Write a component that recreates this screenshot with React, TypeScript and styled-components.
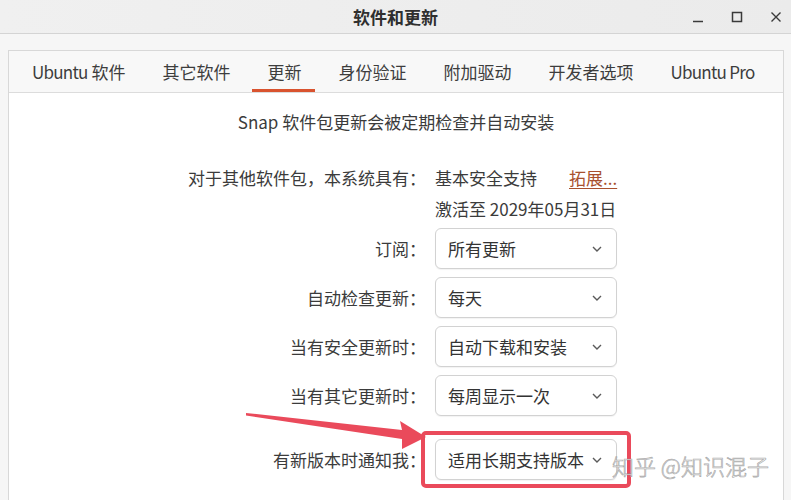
import React from 'react';
import styled, {createGlobalStyle, css} from 'styled-components';

const FONT = '"Noto Sans CJK SC", "Noto Sans", "Liberation Sans", sans-serif';

const GlobalStyle = createGlobalStyle`
  html, body {
    margin: 0;
    padding: 0;
    background: #f6f6f6;
    font-family: ${FONT};
  }
`;

const TABS: {latin?: string; text: string}[] = [
  {latin: 'Ubuntu', text: ' 软件'},
  {text: '其它软件'},
  {text: '更新'},
  {text: '身份验证'},
  {text: '附加驱动'},
  {text: '开发者选项'},
  {latin: 'Ubuntu Pro', text: ''},
];

const SELECTS = [
  {label: '订阅：', value: '所有更新'},
  {label: '自动检查更新：', value: '每天'},
  {label: '当有安全更新时：', value: '自动下载和安装'},
  {label: '当有其它更新时：', value: '每周显示一次'},
];

export default function App() {
  return (
    <Window>
      <GlobalStyle />
      <TitleBar>
        <span />
        <Title>软件和更新</Title>
        <Controls>
          <ControlButton aria-label="最小化">
            <svg width="12" height="12" viewBox="0 0 12 12">
              <path d="M1 10.5h10" stroke="#3a3a3a" strokeWidth="1.5" />
            </svg>
          </ControlButton>
          <ControlButton aria-label="最大化">
            <svg width="12" height="12" viewBox="0 0 12 12">
              <rect x="1.5" y="1.5" width="9" height="9" fill="none" stroke="#3a3a3a" strokeWidth="1.5" />
            </svg>
          </ControlButton>
          <ControlButton aria-label="关闭">
            <svg width="12" height="12" viewBox="0 0 12 12">
              <path d="M1.5 1.5l9 9M10.5 1.5l-9 9" stroke="#3a3a3a" strokeWidth="1.4" />
            </svg>
          </ControlButton>
        </Controls>
      </TitleBar>

      <Body>
        <Notebook>
          <TabStrip>
            {TABS.map((t) => (
              <Tab key={(t.latin || '') + t.text} $active={t.text === '更新'}>
                {t.latin && <Latin>{t.latin}</Latin>}
                {t.text}
              </Tab>
            ))}
          </TabStrip>

          <Page>
            <SnapNote>Snap 软件包更新会被定期检查并自动安装</SnapNote>
            <Form>
              <Row>
                <Label>对于其他软件包，本系统具有：</Label>
                <Value>
                  基本安全支持
                  <ExtendLink href="#">拓展...</ExtendLink>
                </Value>
              </Row>
              <Row $short>
                <span />
                <Value>激活至 2029年05月31日</Value>
              </Row>
              {SELECTS.map((s) => (
                <Row key={s.label}>
                  <Label>{s.label}</Label>
                  <Combo value={s.value} />
                </Row>
              ))}
              <Row $spaced>
                <Label>有新版本时通知我：</Label>
                <ComboWrap>
                  <Combo value="适用长期支持版本" />
                  <Highlight />
                </ComboWrap>
              </Row>
            </Form>
          </Page>
        </Notebook>
      </Body>

      <ArrowLayer width="791" height="500" viewBox="0 0 791 500">
        <polygon
          points="246,413 402,430 400,421 426,437 402,449 402,439 246,415.5"
          fill="#ea4a5b"
        />
      </ArrowLayer>
      <Watermark>知乎 @知识混子</Watermark>
    </Window>
  );
}

function Combo({value}: {value: string}) {
  return (
    <ComboBox>
      <ComboText>{value}</ComboText>
      <svg width="12" height="8" viewBox="0 0 12 8">
        <path d="M2 2l4 4 4-4" fill="none" stroke="#5a5a5a" strokeWidth="1.4" />
      </svg>
    </ComboBox>
  );
}

const Window = styled.div`
  position: relative;
  width: 791px;
  height: 500px;
  overflow: hidden;
  display: flex;
  flex-direction: column;
  background: #f6f6f6;
  color: #3b3b3b;
`;

const TitleBar = styled.div`
  height: 33px;
  flex: none;
  display: grid;
  grid-template-columns: 1fr auto 1fr;
  align-items: center;
  background: linear-gradient(90deg, #f0f0f0, #ebebeb);
  border-bottom: 1px solid #d4d4d4;
`;

const Title = styled.div`
  font-size: 17px;
  font-weight: 700;
  color: #2f2f2f;
  line-height: 31px;
`;

const Controls = styled.div`
  justify-self: end;
  display: flex;
  gap: 13px;
  padding-right: 2px;
`;

const ControlButton = styled.div`
  width: 26px;
  height: 26px;
  display: flex;
  align-items: center;
  justify-content: center;
`;

const Body = styled.div`
  flex: 1;
  display: flex;
  padding: 16px 7px 0 8px;
  min-height: 0;
`;

const Notebook = styled.div`
  flex: 1;
  display: flex;
  flex-direction: column;
  border: 1px solid #d8d8d8;
  border-bottom: none;
`;

const TabStrip = styled.div`
  height: 41px;
  flex: none;
  display: flex;
  padding-left: 4.5px;
  background: #f8f8f8;
  border-bottom: 1px solid #dcdcdc;
`;

const Tab = styled.div<{$active?: boolean}>`
  position: relative;
  display: flex;
  align-items: center;
  padding: 0 18.5px 1px;
  font-size: 17px;
  color: #3d3d3d;
  white-space: pre;
  ${(p) =>
    p.$active &&
    css`
      &::after {
        content: '';
        position: absolute;
        left: 3px;
        right: 5px;
        bottom: 0;
        height: 3px;
        background: #d9532f;
      }
    `}
`;

const Latin = styled.span`
  letter-spacing: -0.75px;
`;

const Page = styled.div`
  flex: 1;
  background: #ffffff;
  padding-top: 17px;
  display: flex;
  flex-direction: column;
`;

const SnapNote = styled.div`
  text-align: center;
  font-size: 17px;
  line-height: 24px;
`;

const Form = styled.div`
  margin-top: 32px;
  display: flex;
  flex-direction: column;
  gap: 8px;
`;

const Row = styled.div<{$short?: boolean; $spaced?: boolean}>`
  display: grid;
  grid-template-columns: 417px auto;
  column-gap: 9px;
  align-items: center;
  font-size: 17px;
  line-height: ${(p) => (p.$short ? '22px' : '24px')};
  margin-top: ${(p) => (p.$spaced ? '15px' : '0')};
`;

const Label = styled.div`
  text-align: right;
  white-space: nowrap;
  color: #3b3b3b;
`;

const Value = styled.div`
  display: flex;
  align-items: center;
  gap: 32px;
  white-space: nowrap;
  color: #3b3b3b;
`;

const ExtendLink = styled.a`
  color: #a8502e;
  text-decoration: underline;
  text-underline-offset: 3px;
`;

const ComboWrap = styled.div`
  position: relative;
  width: 182px;
`;

const ComboBox = styled.div`
  width: 182px;
  height: 41px;
  box-sizing: border-box;
  display: flex;
  align-items: center;
  justify-content: space-between;
  padding: 0 13px 0 12px;
  background: #fff;
  border: 1px solid #d2d2d2;
  border-radius: 6px;
  box-shadow: 0 1px 1px rgba(0, 0, 0, 0.05);
`;

const ComboText = styled.span`
  font-size: 17px;
  color: #333;
  white-space: nowrap;
`;

const Highlight = styled.div`
  position: absolute;
  left: -14px;
  right: -14px;
  top: -8px;
  bottom: -8px;
  border: 4px solid #ea4a5b;
  border-radius: 5px;
  pointer-events: none;
`;

const ArrowLayer = styled.svg`
  position: absolute;
  left: 0;
  top: 0;
  pointer-events: none;
`;

const Watermark = styled.div`
  position: absolute;
  left: 612px;
  top: 451px;
  font-size: 22px;
  line-height: 28px;
  font-weight: 300;
  color: rgba(255, 255, 255, 0.8);
  -webkit-text-stroke: 0.7px rgba(140, 140, 140, 0.75);
  white-space: nowrap;
  pointer-events: none;
`;
